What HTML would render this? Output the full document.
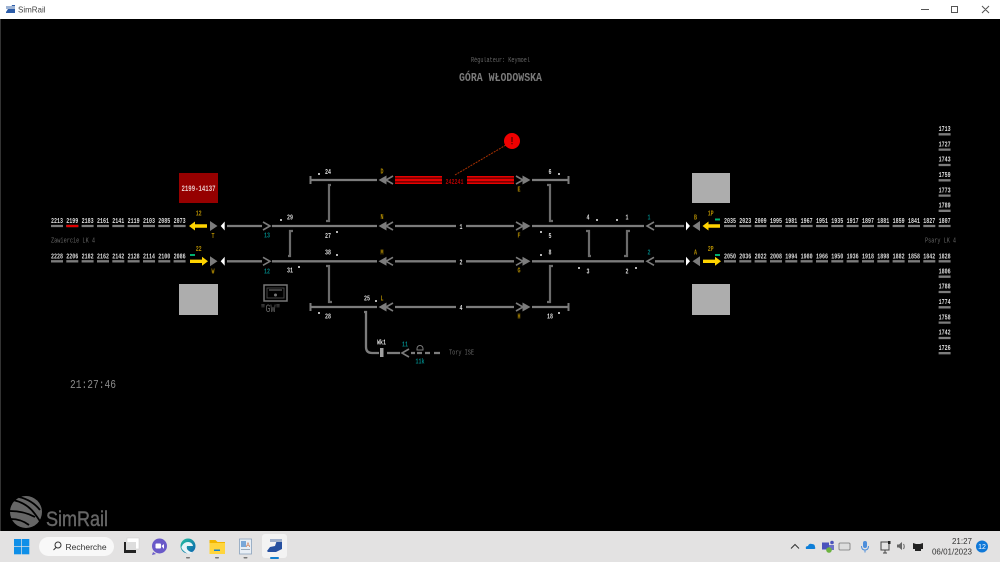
<!DOCTYPE html>
<html lang="fr"><head><meta charset="utf-8"><title>SimRail</title>
<style>
html,body{margin:0;padding:0;width:1000px;height:562px;overflow:hidden;background:#000}
svg{display:block;position:absolute;left:0;top:0}
text{font-family:"Liberation Mono",monospace}
.n{font-size:7.5px;font-weight:bold;fill:#ddd}
.y{font-size:7.5px;font-weight:bold;fill:#b08a00;text-anchor:middle}
.t{font-size:7.5px;font-weight:bold;fill:#008080;text-anchor:middle}
.w{font-size:7.5px;font-weight:bold;fill:#ddd;text-anchor:middle}
.g{font-size:7.5px;fill:#666}
</style></head><body>
<svg width="1000" height="562" viewBox="0 0 1000 562" xmlns="http://www.w3.org/2000/svg">
<defs>
<filter id="b" x="0" y="0" width="100%" height="100%"><feGaussianBlur stdDeviation="0.22"/></filter>
<linearGradient id="eg" x1="0" y1="0" x2="1" y2="1"><stop offset="0" stop-color="#25c2a0"/><stop offset="1" stop-color="#0b5fb0"/></linearGradient>
</defs>
<rect width="1000" height="562" fill="#000"/>
<g filter="url(#b)">
<!-- header -->
<text x="500.5" y="62" font-size="7.5" fill="#666" text-anchor="middle" textLength="59" lengthAdjust="spacingAndGlyphs">Régulateur: Keymoel</text>
<text x="500.5" y="81" font-size="12" font-weight="bold" fill="#7a7a7a" text-anchor="middle" textLength="83" lengthAdjust="spacingAndGlyphs">GÓRA WŁODOWSKA</text>

<!-- boxes -->
<rect x="179" y="173" width="39" height="30" fill="#960000"/>
<text x="198.500" y="191" font-size="8.500" font-weight="bold" fill="#e8c8c8" text-anchor="middle" textLength="34" lengthAdjust="spacingAndGlyphs">2199-14137</text>
<rect x="179" y="284" width="39" height="31" fill="#adadad"/>
<rect x="692" y="173" width="38" height="30" fill="#adadad"/>
<rect x="692" y="284" width="38" height="31" fill="#adadad"/>

<!-- occupancy bars left/right -->
<path stroke="#7c7c7c" stroke-width="2.300" fill="none" d="M51 226h12M66.300 226h12M97 226h12M112.300 226h12M127.600 226h12M143 226h12M158.300 226h12M173.600 226h12
M51 261.300h12M66.300 261.300h12M81.600 261.300h12M97 261.300h12M112.300 261.300h12M127.600 261.300h12M143 261.300h12M158.300 261.300h12M173.600 261.300h12
M81.600 226h12
M724 226h12M739.300 226h12M754.600 226h12M770 226h12M785.300 226h12M800.600 226h12M816 226h12M831.300 226h12M846.600 226h12M862 226h12M877.300 226h12M892.600 226h12M908 226h12M923.300 226h12M938.600 226h12
M724 261.300h12M739.300 261.300h12M754.600 261.300h12M770 261.300h12M785.300 261.300h12M800.600 261.300h12M816 261.300h12M831.300 261.300h12M846.600 261.300h12M862 261.300h12M877.300 261.300h12M892.600 261.300h12M908 261.300h12M923.300 261.300h12M938.600 261.300h12
M938.600 134.300h12M938.600 149.600h12M938.600 165h12M938.600 180.300h12M938.600 195.600h12M938.600 210.800h12
M938.600 276.700h12M938.600 292h12M938.600 307.300h12M938.600 322.600h12M938.600 338h12M938.600 353.200h12"/>
<path stroke="#e00000" stroke-width="2.300" d="M66.300 226h12"/>

<!-- numbers -->
<g>
<text class="n" x="51" y="223" textLength="12" lengthAdjust="spacingAndGlyphs">2213</text>
<text class="n" x="66.300" y="223" textLength="12" lengthAdjust="spacingAndGlyphs">2199</text>
<text class="n" x="81.600" y="223" textLength="12" lengthAdjust="spacingAndGlyphs">2183</text>
<text class="n" x="97" y="223" textLength="12" lengthAdjust="spacingAndGlyphs">2161</text>
<text class="n" x="112.300" y="223" textLength="12" lengthAdjust="spacingAndGlyphs">2141</text>
<text class="n" x="127.600" y="223" textLength="12" lengthAdjust="spacingAndGlyphs">2119</text>
<text class="n" x="143" y="223" textLength="12" lengthAdjust="spacingAndGlyphs">2103</text>
<text class="n" x="158.300" y="223" textLength="12" lengthAdjust="spacingAndGlyphs">2085</text>
<text class="n" x="173.600" y="223" textLength="12" lengthAdjust="spacingAndGlyphs">2073</text>
<text class="n" x="51" y="258.300" textLength="12" lengthAdjust="spacingAndGlyphs">2228</text>
<text class="n" x="66.300" y="258.300" textLength="12" lengthAdjust="spacingAndGlyphs">2206</text>
<text class="n" x="81.600" y="258.300" textLength="12" lengthAdjust="spacingAndGlyphs">2182</text>
<text class="n" x="97" y="258.300" textLength="12" lengthAdjust="spacingAndGlyphs">2162</text>
<text class="n" x="112.300" y="258.300" textLength="12" lengthAdjust="spacingAndGlyphs">2142</text>
<text class="n" x="127.600" y="258.300" textLength="12" lengthAdjust="spacingAndGlyphs">2128</text>
<text class="n" x="143" y="258.300" textLength="12" lengthAdjust="spacingAndGlyphs">2114</text>
<text class="n" x="158.300" y="258.300" textLength="12" lengthAdjust="spacingAndGlyphs">2100</text>
<text class="n" x="173.600" y="258.300" textLength="12" lengthAdjust="spacingAndGlyphs">2086</text>

<text class="n" x="724" y="223" textLength="12" lengthAdjust="spacingAndGlyphs">2035</text>
<text class="n" x="739.300" y="223" textLength="12" lengthAdjust="spacingAndGlyphs">2023</text>
<text class="n" x="754.600" y="223" textLength="12" lengthAdjust="spacingAndGlyphs">2009</text>
<text class="n" x="770" y="223" textLength="12" lengthAdjust="spacingAndGlyphs">1995</text>
<text class="n" x="785.300" y="223" textLength="12" lengthAdjust="spacingAndGlyphs">1981</text>
<text class="n" x="800.600" y="223" textLength="12" lengthAdjust="spacingAndGlyphs">1967</text>
<text class="n" x="816" y="223" textLength="12" lengthAdjust="spacingAndGlyphs">1951</text>
<text class="n" x="831.300" y="223" textLength="12" lengthAdjust="spacingAndGlyphs">1935</text>
<text class="n" x="846.600" y="223" textLength="12" lengthAdjust="spacingAndGlyphs">1917</text>
<text class="n" x="862" y="223" textLength="12" lengthAdjust="spacingAndGlyphs">1897</text>
<text class="n" x="877.300" y="223" textLength="12" lengthAdjust="spacingAndGlyphs">1881</text>
<text class="n" x="892.600" y="223" textLength="12" lengthAdjust="spacingAndGlyphs">1859</text>
<text class="n" x="908" y="223" textLength="12" lengthAdjust="spacingAndGlyphs">1841</text>
<text class="n" x="923.300" y="223" textLength="12" lengthAdjust="spacingAndGlyphs">1827</text>
<text class="n" x="938.600" y="223" textLength="12" lengthAdjust="spacingAndGlyphs">1807</text>
<text class="n" x="724" y="258.300" textLength="12" lengthAdjust="spacingAndGlyphs">2050</text>
<text class="n" x="739.300" y="258.300" textLength="12" lengthAdjust="spacingAndGlyphs">2036</text>
<text class="n" x="754.600" y="258.300" textLength="12" lengthAdjust="spacingAndGlyphs">2022</text>
<text class="n" x="770" y="258.300" textLength="12" lengthAdjust="spacingAndGlyphs">2008</text>
<text class="n" x="785.300" y="258.300" textLength="12" lengthAdjust="spacingAndGlyphs">1994</text>
<text class="n" x="800.600" y="258.300" textLength="12" lengthAdjust="spacingAndGlyphs">1980</text>
<text class="n" x="816" y="258.300" textLength="12" lengthAdjust="spacingAndGlyphs">1966</text>
<text class="n" x="831.300" y="258.300" textLength="12" lengthAdjust="spacingAndGlyphs">1950</text>
<text class="n" x="846.600" y="258.300" textLength="12" lengthAdjust="spacingAndGlyphs">1936</text>
<text class="n" x="862" y="258.300" textLength="12" lengthAdjust="spacingAndGlyphs">1918</text>
<text class="n" x="877.300" y="258.300" textLength="12" lengthAdjust="spacingAndGlyphs">1898</text>
<text class="n" x="892.600" y="258.300" textLength="12" lengthAdjust="spacingAndGlyphs">1882</text>
<text class="n" x="908" y="258.300" textLength="12" lengthAdjust="spacingAndGlyphs">1858</text>
<text class="n" x="923.300" y="258.300" textLength="12" lengthAdjust="spacingAndGlyphs">1842</text>
<text class="n" x="938.600" y="258.300" textLength="12" lengthAdjust="spacingAndGlyphs">1828</text>

<text class="n" x="938.600" y="131" textLength="12" lengthAdjust="spacingAndGlyphs">1713</text>
<text class="n" x="938.600" y="146.300" textLength="12" lengthAdjust="spacingAndGlyphs">1727</text>
<text class="n" x="938.600" y="161.600" textLength="12" lengthAdjust="spacingAndGlyphs">1743</text>
<text class="n" x="938.600" y="177" textLength="12" lengthAdjust="spacingAndGlyphs">1759</text>
<text class="n" x="938.600" y="192.300" textLength="12" lengthAdjust="spacingAndGlyphs">1773</text>
<text class="n" x="938.600" y="207.600" textLength="12" lengthAdjust="spacingAndGlyphs">1789</text>
<text class="n" x="938.600" y="273.400" textLength="12" lengthAdjust="spacingAndGlyphs">1806</text>
<text class="n" x="938.600" y="288.700" textLength="12" lengthAdjust="spacingAndGlyphs">1788</text>
<text class="n" x="938.600" y="304" textLength="12" lengthAdjust="spacingAndGlyphs">1774</text>
<text class="n" x="938.600" y="319.300" textLength="12" lengthAdjust="spacingAndGlyphs">1758</text>
<text class="n" x="938.600" y="334.600" textLength="12" lengthAdjust="spacingAndGlyphs">1742</text>
<text class="n" x="938.600" y="350" textLength="12" lengthAdjust="spacingAndGlyphs">1726</text>
</g>

<text class="g" x="51" y="242.500" textLength="44" lengthAdjust="spacingAndGlyphs">Zawiercie LK 4</text>
<text class="g" x="925" y="242.500" textLength="31" lengthAdjust="spacingAndGlyphs">Psary LK 4</text>

<!-- tracks -->
<path stroke="#7c7c7c" stroke-width="2.300" fill="none" d="M227 226h35M272 226h105M395 226h61M466 226h48M532 226h112M655 226h29
M227 261.300h35M272 261.300h105M395 261.300h61M466 261.300h48M532 261.300h112M655 261.300h29
M310 180h67M532 180h37M310 307h67M395 307h61M466 307h48M532 307h37"/>
<path stroke="#7c7c7c" stroke-width="2" fill="none" d="M310.500 176v8M568.500 176v8M310.500 303v8M568.500 303v8"/>

<!-- crossovers -->
<path stroke="#6c6c6c" stroke-width="2.200" fill="none" d="M331 185h-2v36h-3M547 185h3v36h3M293 231h-3v25h-2M326 266h3v36h3M553 266h-3v36h-3M586 231h3v25h2M630 231h-3v25h-3"/>

<!-- double chevrons -->
<g fill="#7c7c7c" stroke="none">
<path d="M378.500 180l8-4.500v9zM378.500 226l8-4.500v9zM378.500 261.300l8-4.500v9zM378.500 307l8-4.500v9z"/>
<path d="M530.500 180l-8-4.500v9zM530.500 226l-8-4.500v9zM530.500 261.300l-8-4.500v9zM530.500 307l-8-4.500v9z"/>
</g>
<path stroke="#7c7c7c" stroke-width="1.600" fill="none" d="M393 176l-7 4 7 4M393 222l-7 4 7 4M393 257.300l-7 4 7 4M393 303l-7 4 7 4
M516 176l7 4-7 4M516 222l7 4-7 4M516 257.300l7 4-7 4M516 303l7 4-7 4
M263 222l7 4-7 4M263 257.300l7 4-7 4M654 222l-7 4 7 4M654 257.300l-7 4 7 4"/>

<!-- red occupied -->
<rect x="395" y="176" width="47" height="8" fill="#e80000"/>
<rect x="395" y="177.500" width="47" height="1.300" fill="#600000"/><rect x="395" y="181.200" width="47" height="1.300" fill="#600000"/>
<rect x="467" y="176" width="47" height="8" fill="#e80000"/>
<rect x="467" y="177.500" width="47" height="1.300" fill="#600000"/><rect x="467" y="181.200" width="47" height="1.300" fill="#600000"/>
<text x="454.500" y="184" font-size="7.500" font-weight="bold" fill="#b00000" text-anchor="middle" textLength="18" lengthAdjust="spacingAndGlyphs">242241</text>
<path d="M455 175L506 145" stroke="#a83000" stroke-width="1" stroke-dasharray="2 1" fill="none"/>
<circle cx="512" cy="141" r="8" fill="#f00000"/>
<rect x="511.400" y="137" width="1.200" height="5" fill="#500"/><rect x="511.400" y="143" width="1.200" height="1.300" fill="#500"/>

<!-- signals left -->
<path fill="#ffd400" d="M189 226l6-4.500v2.800h12v3.400h-12v2.800zM208 261.300l-6-4.500v2.800h-12v3.400h12v2.800z"/>
<path fill="#7c7c7c" d="M210 221l7.500 5-7.500 5zM210 256.300l7.500 5-7.500 5z"/>
<path fill="#fff" d="M224.700 221.500v9l-4-4.500zM224.700 256.800v9l-4-4.500z"/>
<rect x="190" y="254" width="5" height="2" fill="#00b070"/>
<!-- signals right -->
<path fill="#ffd400" d="M702.500 226l6-4.500v2.800h11.500v3.400h-11.500v2.800zM721 261.300l-6-4.500v2.800h-12v3.400h12v2.800z"/>
<path fill="#7c7c7c" d="M700 221l-7.500 5 7.500 5zM700 256.300l-7.500 5 7.500 5z"/>
<path fill="#fff" d="M686 221.500v9l4-4.500zM686 256.800v9l4-4.500z"/>
<rect x="715" y="218.500" width="5" height="2" fill="#00b070"/><rect x="715" y="254" width="5" height="2" fill="#00b070"/>

<!-- labels -->
<text class="y" x="198.700" y="215.500" textLength="6" lengthAdjust="spacingAndGlyphs">12</text><text class="y" x="198.700" y="251" textLength="6" lengthAdjust="spacingAndGlyphs">22</text>
<text class="y" x="213" y="238" textLength="3" lengthAdjust="spacingAndGlyphs">T</text><text class="y" x="213" y="273.500" textLength="3" lengthAdjust="spacingAndGlyphs">W</text>
<text class="y" x="382" y="173.500" textLength="3" lengthAdjust="spacingAndGlyphs">D</text><text class="y" x="519" y="191.500" textLength="3" lengthAdjust="spacingAndGlyphs">E</text>
<text class="y" x="382" y="219" textLength="3" lengthAdjust="spacingAndGlyphs">N</text><text class="y" x="519" y="237.500" textLength="3" lengthAdjust="spacingAndGlyphs">F</text>
<text class="y" x="382" y="254.500" textLength="3" lengthAdjust="spacingAndGlyphs">M</text><text class="y" x="519" y="272.500" textLength="3" lengthAdjust="spacingAndGlyphs">G</text>
<text class="y" x="382" y="300.500" textLength="3" lengthAdjust="spacingAndGlyphs">L</text><text class="y" x="519" y="318.500" textLength="3" lengthAdjust="spacingAndGlyphs">H</text>
<text class="y" x="695.500" y="219.500" textLength="3" lengthAdjust="spacingAndGlyphs">B</text><text class="y" x="695.500" y="254.500" textLength="3" lengthAdjust="spacingAndGlyphs">A</text>
<text class="y" x="710.700" y="215.500" textLength="6" lengthAdjust="spacingAndGlyphs">1P</text><text class="y" x="710.700" y="251" textLength="6" lengthAdjust="spacingAndGlyphs">2P</text>
<text class="t" x="267" y="237.500" textLength="6" lengthAdjust="spacingAndGlyphs">13</text><text class="t" x="267" y="273.500" textLength="6" lengthAdjust="spacingAndGlyphs">12</text>
<text class="t" x="649" y="219.500" textLength="3" lengthAdjust="spacingAndGlyphs">1</text><text class="t" x="649" y="254.500" textLength="3" lengthAdjust="spacingAndGlyphs">2</text>
<text class="t" x="405" y="346.500" textLength="6" lengthAdjust="spacingAndGlyphs">11</text><text class="t" x="420" y="363.500" textLength="9" lengthAdjust="spacingAndGlyphs">11k</text>
<g>
<text class="w" x="328" y="174" textLength="6" lengthAdjust="spacingAndGlyphs">24</text><text class="w" x="550" y="174" textLength="3" lengthAdjust="spacingAndGlyphs">6</text>
<text class="w" x="290" y="219.500" textLength="6" lengthAdjust="spacingAndGlyphs">29</text><text class="w" x="328" y="238" textLength="6" lengthAdjust="spacingAndGlyphs">27</text><text class="w" x="550" y="238" textLength="3" lengthAdjust="spacingAndGlyphs">5</text>
<text class="w" x="328" y="254.500" textLength="6" lengthAdjust="spacingAndGlyphs">38</text><text class="w" x="550" y="254.500" textLength="3" lengthAdjust="spacingAndGlyphs">8</text><text class="w" x="290" y="272.500" textLength="6" lengthAdjust="spacingAndGlyphs">31</text>
<text class="w" x="367" y="300.500" textLength="6" lengthAdjust="spacingAndGlyphs">25</text><text class="w" x="328" y="318.500" textLength="6" lengthAdjust="spacingAndGlyphs">28</text><text class="w" x="550" y="318.500" textLength="6" lengthAdjust="spacingAndGlyphs">18</text>
<text class="w" x="588" y="219.500" textLength="3" lengthAdjust="spacingAndGlyphs">4</text><text class="w" x="627" y="219.500" textLength="3" lengthAdjust="spacingAndGlyphs">1</text><text class="w" x="588" y="273.500" textLength="3" lengthAdjust="spacingAndGlyphs">3</text><text class="w" x="627" y="273.500" textLength="3" lengthAdjust="spacingAndGlyphs">2</text>
<text class="w" x="461" y="229" textLength="3" lengthAdjust="spacingAndGlyphs">1</text><text class="w" x="461" y="264.300" textLength="3" lengthAdjust="spacingAndGlyphs">2</text><text class="w" x="461" y="310" textLength="3" lengthAdjust="spacingAndGlyphs">4</text>
<text class="w" x="381.500" y="344.500" textLength="9" lengthAdjust="spacingAndGlyphs">Wk1</text>
</g>
<g fill="#eee">
<circle cx="319" cy="174" r="1"/><circle cx="559" cy="174" r="1"/><circle cx="281" cy="220" r="1"/><circle cx="337" cy="232" r="1"/><circle cx="541" cy="232" r="1"/><circle cx="337" cy="255" r="1"/><circle cx="541" cy="255" r="1"/><circle cx="299" cy="267" r="1"/><circle cx="376" cy="301" r="1"/><circle cx="319" cy="313" r="1"/><circle cx="559" cy="313" r="1"/><circle cx="597" cy="220" r="1"/><circle cx="617" cy="220" r="1"/><circle cx="579" cy="268" r="1"/><circle cx="636" cy="268" r="1"/>
</g>

<!-- spur -->
<path stroke="#7c7c7c" stroke-width="2.300" fill="none" d="M364 312h2v35q0 6 6 6h7M387 353h13M411 353h4M417 353h5M425 353h5M434 353h6"/>
<rect x="380" y="348" width="3.500" height="9" fill="#a0a0a0"/>
<path stroke="#7c7c7c" stroke-width="1.600" fill="none" d="M409 349l-7 4 7 4"/>
<path stroke="#7c7c7c" stroke-width="1" fill="none" d="M417 350v-1.500a3 3 0 0 1 6 0v1.500z"/>
<text class="g" x="449" y="354.500" textLength="25" lengthAdjust="spacingAndGlyphs">Tory ISE</text>

<!-- GW -->
<rect x="264" y="285" width="23" height="16" fill="none" stroke="#777" stroke-width="1.500"/>
<rect x="267" y="288" width="17" height="10" fill="none" stroke="#444" stroke-width="1"/>
<rect x="269" y="289.500" width="13" height="1" fill="#777"/><circle cx="275.500" cy="295" r="1.500" fill="#777"/>
<text x="270.500" y="312" font-size="11" fill="#666" text-anchor="middle" textLength="20" lengthAdjust="spacingAndGlyphs">"GW"</text>

<!-- clock -->
<text x="70" y="388" font-size="11.500" fill="#888" textLength="46" lengthAdjust="spacingAndGlyphs">21:27:46</text>

<!-- logo -->
<circle cx="26" cy="512" r="16" fill="#666"/>
<path stroke="#000" stroke-width="1.800" fill="none" d="M13 500q14 3 22 14t6 10M19 497q13 3 21 13M10 511q14 0 25 6M11 519q10 0 18 6"/>
<text x="46" y="526" font-size="21" fill="#666" stroke="#666" stroke-width=".4" textLength="62" lengthAdjust="spacingAndGlyphs" style="font-family:'Liberation Sans',sans-serif">SimRail</text>
</g>

<!-- title bar -->
<rect x="0" y="0" width="1000" height="19" fill="#fff"/>
<rect x="0" y="19" width="1" height="512" fill="#333"/>
<path fill="#2b5ca8" d="M6 12l2-3 3-1 1-3h3v8h-9z"/><rect x="6" y="6" width="9" height="3" fill="#9fb4d4"/>
<text x="18" y="12.500" font-size="8" style="font-family:'Liberation Sans',sans-serif" fill="#444">SimRail</text>
<path stroke="#555" stroke-width="1" fill="none" d="M921 9.500h8M951.500 6.500h6v6h-6zM982 6l7 7M989 6l-7 7"/>

<!-- taskbar -->
<rect x="0" y="531" width="1000" height="31" fill="#e3e2e2"/>
<g fill="#0f8fe8"><rect x="14" y="539" width="7.300" height="7.300"/><rect x="22" y="539" width="7.300" height="7.300"/><rect x="14" y="547" width="7.300" height="7.300"/><rect x="22" y="547" width="7.300" height="7.300"/></g>
<rect x="39" y="537" width="75" height="19" rx="9.500" fill="#f8f8f8"/>
<circle cx="58" cy="545" r="3" fill="none" stroke="#333" stroke-width="1"/><path d="M56 547.500l-2.500 2.500" stroke="#333" stroke-width="1"/>
<text x="65.500" y="550" font-size="8.500" fill="#333" style="font-family:'Liberation Sans',sans-serif">Recherche</text>
<!-- task view -->
<rect x="127" y="538" width="12" height="11" fill="#fff" stroke="#ccc" stroke-width=".5"/>
<rect x="124" y="542" width="12" height="11" fill="#222"/><rect x="126" y="542" width="10" height="8" fill="#ddd"/>
<!-- chat -->
<circle cx="159.500" cy="546" r="7.500" fill="#6a5ac8"/><path d="M153 552l-1 3 4-1z" fill="#6a5ac8"/><rect x="155.500" y="543.500" width="5.500" height="5" rx="1" fill="#fff"/><path d="M161.500 546l2.500-2v5z" fill="#fff"/>
<!-- edge -->
<circle cx="188" cy="546" r="7.500" fill="url(#eg)"/><path d="M182 546q2-4 6-4t5 4h-6q-1 3 2 5t4 0q-3 5-8 1t-3-6z" fill="#e8f4f8"/><rect x="186" y="557" width="4" height="1.500" rx=".7" fill="#777"/>
<!-- folder -->
<path d="M209.500 540h6l2 2h7.500v3h-15.500z" fill="#f2b600"/><rect x="209.500" y="543" width="15.500" height="11" fill="#ffd53d"/><rect x="214" y="549.500" width="6" height="1.500" fill="#0f7fd0"/><rect x="215" y="557" width="4" height="1.500" rx=".7" fill="#777"/>
<!-- app -->
<rect x="239.500" y="539" width="12" height="15" fill="#e8eef5" stroke="#8aa2bd" stroke-width=".8"/><rect x="241" y="541" width="5" height="6" fill="#7aa7d8"/><text x="246" y="547" font-size="6" fill="#d05a20" style="font-family:'Liberation Sans',sans-serif">A</text><rect x="241" y="549" width="9" height="1" fill="#9ab"/><rect x="243.500" y="557" width="4" height="1.500" rx=".7" fill="#777"/>
<!-- simrail -->
<rect x="262" y="534" width="25" height="24" rx="3" fill="#f3f3f3"/>
<path fill="#2650a0" d="M267 551l3-4 5-1 2-6h5v9l-6 3h-8z"/><rect x="270" y="539" width="12" height="3" fill="#9fb0cc"/><rect x="270" y="557" width="9" height="2" rx="1" fill="#0f7fd0"/>
<!-- tray -->
<path d="M791 548.500l4-4 4 4" stroke="#333" stroke-width="1" fill="none"/>
<path d="M806 549q-1-3 2-3 1-3 4-2 3 0 3 3 1 2-1 2z" fill="#0f7fd8"/>
<rect x="822" y="542.500" width="7" height="7" fill="#4b53bc"/><circle cx="832" cy="542.500" r="1.800" fill="#4b53bc"/><rect x="829" y="545" width="5" height="5" fill="#6c72c8"/><circle cx="829" cy="550" r="2.800" fill="#6cb33f"/>
<rect x="839" y="543" width="11" height="7" rx="1" fill="#ddd" stroke="#777" stroke-width=".8"/>
<rect x="863" y="541" width="4" height="7" rx="2" fill="#4d8edb"/><path d="M861.500 546q0 4 3.500 4t3.500-4M865 550v2.500" stroke="#4d8edb" stroke-width="1" fill="none"/>
<rect x="881" y="542" width="8" height="8" fill="none" stroke="#444" stroke-width="1"/><path d="M885 550v3M883 553h4" stroke="#444" stroke-width="1"/><rect x="888" y="541" width="2.500" height="3" fill="#222"/>
<path d="M897 544.500h2l3-2.500v8l-3-2.500h-2z" fill="#666"/><path d="M903.500 544q1.500 2.500 0 5" stroke="#666" fill="none"/>
<path d="M913 543l3 1h4l3-1v6h-2v2h-6v-2h-2z" fill="#222"/>
<text x="962" y="544" font-size="8" fill="#333" text-anchor="middle" style="font-family:'Liberation Sans',sans-serif">21:27</text>
<text x="952" y="554.500" font-size="8" fill="#333" text-anchor="middle" style="font-family:'Liberation Sans',sans-serif">06/01/2023</text>
<circle cx="982" cy="546.500" r="6" fill="#0f78d8"/>
<text x="982" y="549" font-size="7" fill="#fff" text-anchor="middle" style="font-family:'Liberation Sans',sans-serif">12</text>
</svg>
</body></html>
